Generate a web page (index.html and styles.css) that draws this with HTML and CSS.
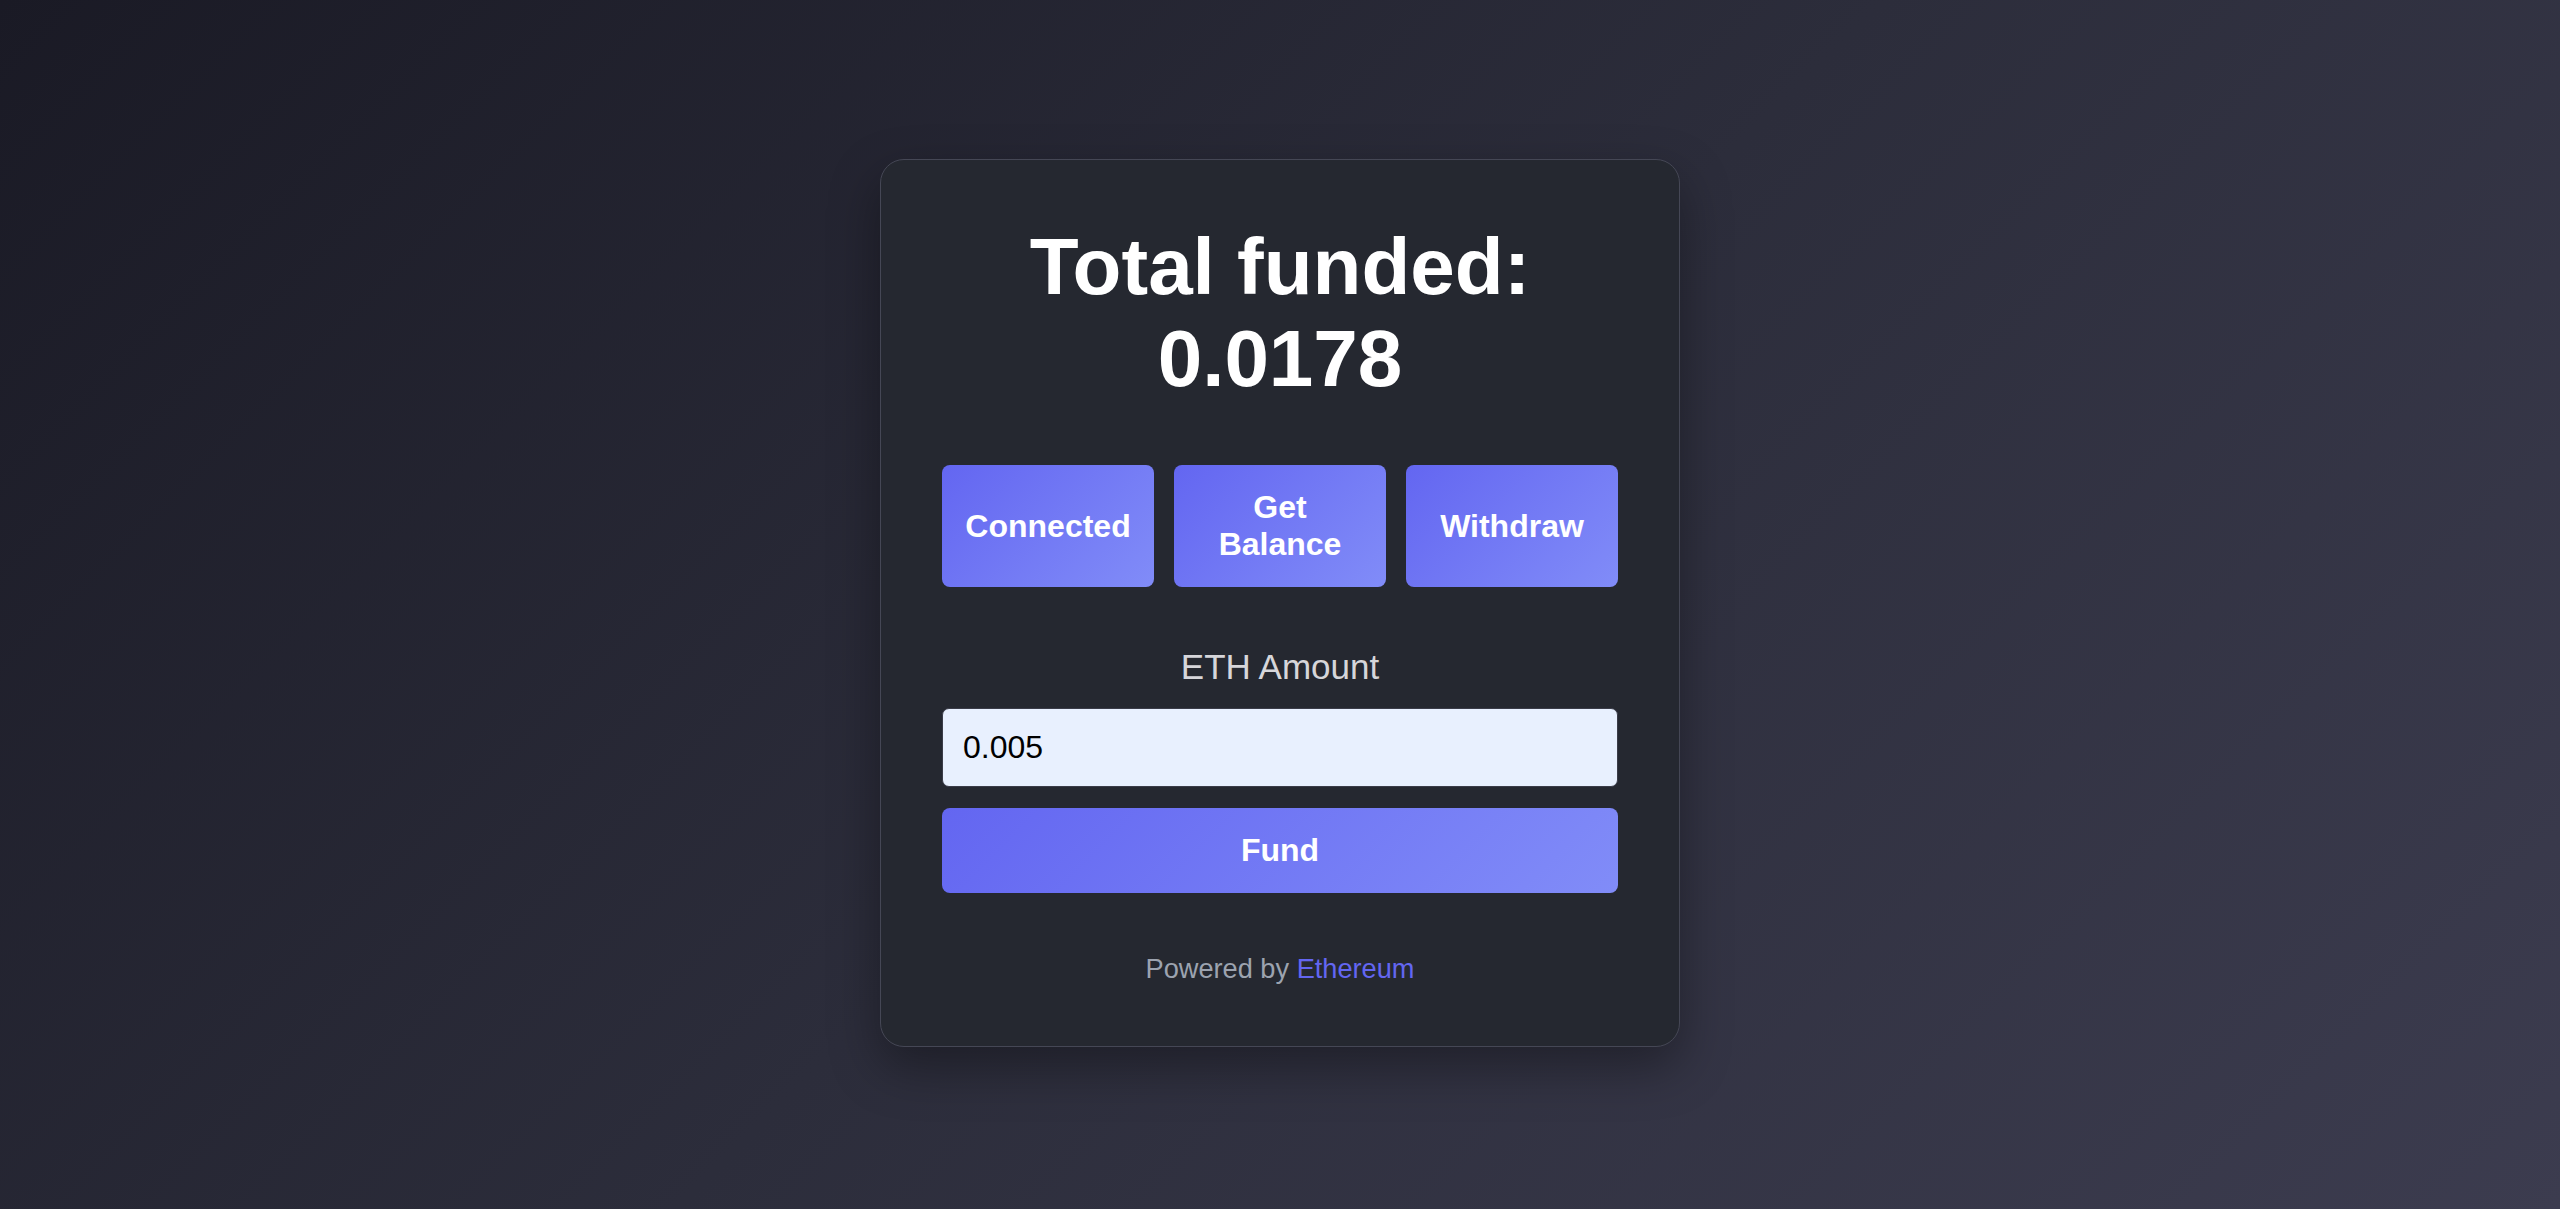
FILE: index.html
```html
<!DOCTYPE html>
<html lang="en">
<head>
<meta charset="utf-8">
<title>Fund Me</title>
<link rel="stylesheet" href="styles.css">
</head>
<body>
<main class="card">
  <h1 class="title">Total funded: 0.0178</h1>
  <div class="actions">
    <button class="btn">Connected</button>
    <button class="btn">Get Balance</button>
    <button class="btn">Withdraw</button>
  </div>
  <label class="label" for="eth">ETH Amount</label>
  <input class="amount" id="eth" type="text" value="0.005">
  <button class="btn btn-wide">Fund</button>
  <p class="footer">Powered by <span class="accent">Ethereum</span></p>
</main>
</body>
</html>
```

FILE: styles.css
```css
html, body {
  margin: 0;
  padding: 0;
}
body {
  box-sizing: border-box;
  min-height: 100vh;
  padding-bottom: 3px;
  display: flex;
  align-items: center;
  justify-content: center;
  background: linear-gradient(135deg, #1a1a25 0%, #2c2d3b 50%, #3c3c4f 100%);
  font-family: "Liberation Sans", Arial, sans-serif;
  color: #ffffff;
}
.card {
  box-sizing: border-box;
  width: 800px;
  padding: 61px;
  border: 1px solid #454755;
  border-radius: 24px;
  background: #252830;
  box-shadow: 0 20px 50px rgba(0, 0, 0, 0.35);
  display: flex;
  flex-direction: column;
  text-align: center;
}
.title {
  margin: 0 0 60px;
  font-size: 80px;
  font-weight: 700;
  line-height: normal;
  color: #ffffff;
}
.actions {
  display: grid;
  grid-template-columns: repeat(3, 1fr);
  gap: 20px;
  margin-bottom: 60px;
}
.btn {
  border: none;
  border-radius: 8px;
  padding: 24px 20px;
  background: linear-gradient(135deg, #6366f1 0%, #818cf8 100%);
  color: #ffffff;
  font-family: "Liberation Sans", Arial, sans-serif;
  font-size: 32px;
  font-weight: 700;
  line-height: normal;
  cursor: pointer;
}
.label {
  display: block;
  margin-bottom: 21px;
  font-size: 35px;
  line-height: normal;
  color: #d6d6da;
}
.amount {
  box-sizing: border-box;
  width: 100%;
  padding: 20px;
  border: 1px solid #3a3c48;
  border-radius: 7px;
  background: #e8f0fe;
  color: #000000;
  font-family: "Liberation Sans", Arial, sans-serif;
  font-size: 32px;
  line-height: normal;
  margin: 0 0 21px;
  outline: none;
}
.btn-wide {
  width: 100%;
}
.footer {
  margin: 60px 0 0;
  font-size: 27.2px;
  line-height: normal;
  color: #9ca3af;
}
.accent {
  color: #6366f1;
}
```
